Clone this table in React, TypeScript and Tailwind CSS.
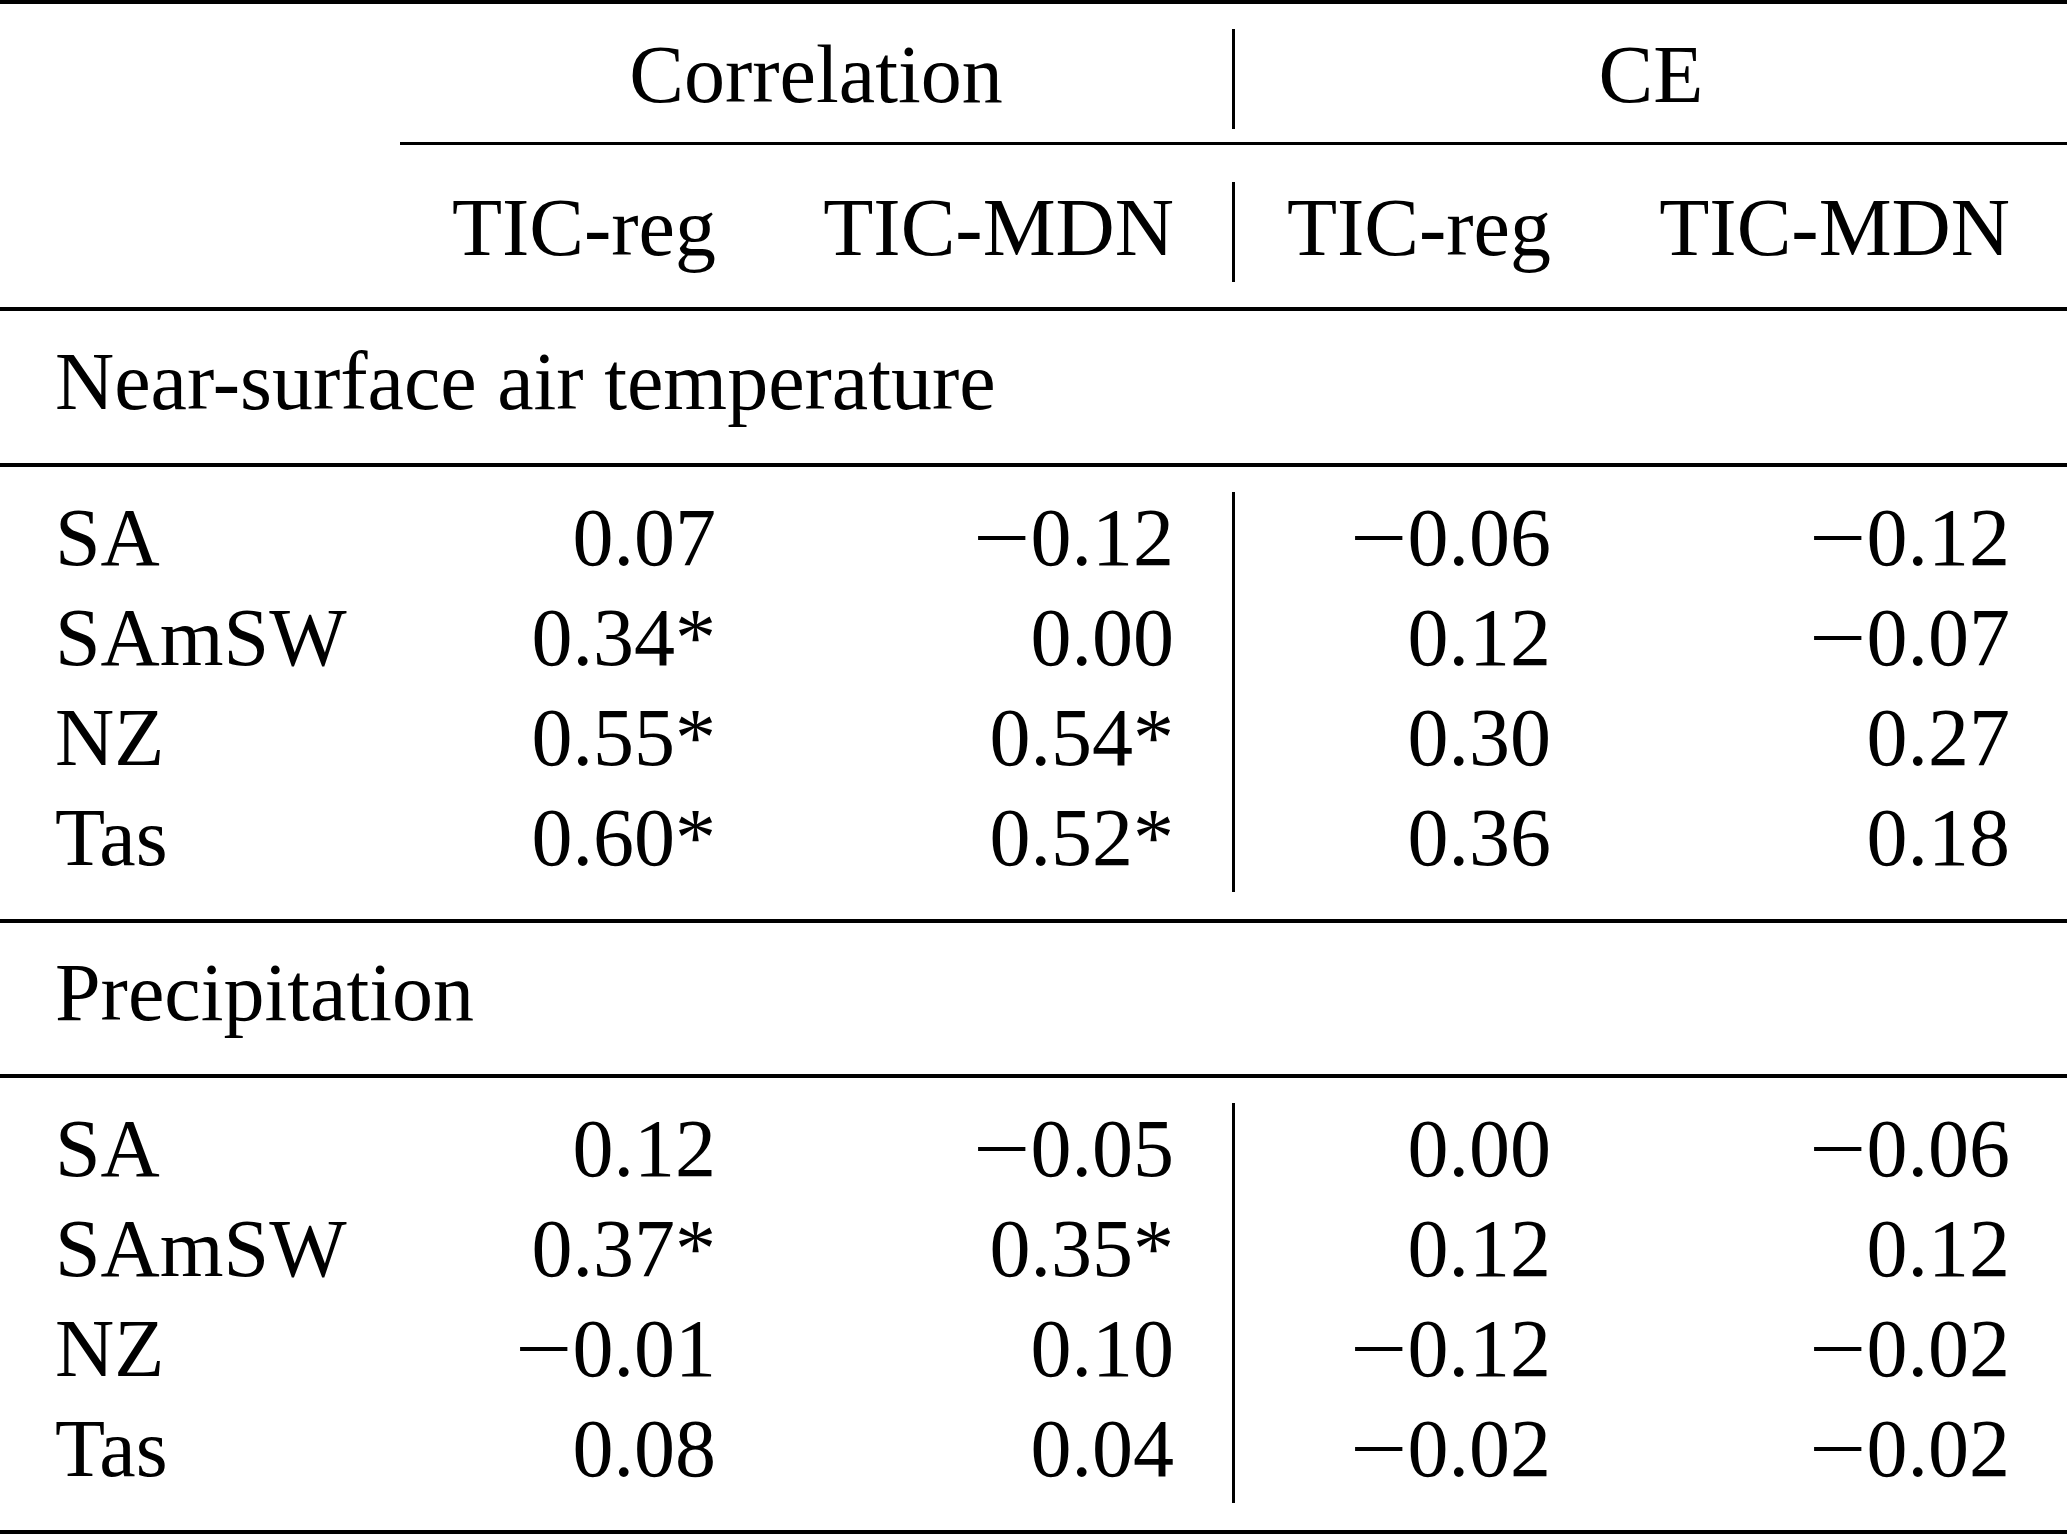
import React from "react";

type Row = [string, string, string, string, string];

const temperature: Row[] = [
  ["SA", "0.07", "-0.12", "-0.06", "-0.12"],
  ["SAmSW", "0.34*", "0.00", "0.12", "-0.07"],
  ["NZ", "0.55*", "0.54*", "0.30", "0.27"],
  ["Tas", "0.60*", "0.52*", "0.36", "0.18"],
];

const precipitation: Row[] = [
  ["SA", "0.12", "-0.05", "0.00", "-0.06"],
  ["SAmSW", "0.37*", "0.35*", "0.12", "0.12"],
  ["NZ", "-0.01", "0.10", "-0.12", "-0.02"],
  ["Tas", "0.08", "0.04", "-0.02", "-0.02"],
];

// column boxes: label 400 | corr-reg 373 | corr-mdn 462 (incl. 3px rule) | ce-reg 373 | ce-mdn 459
const grid = "grid grid-cols-[400px_373px_462px_373px_459px]";
const cell = "h-[100px] leading-[92px] whitespace-nowrap";

function Num({ v }: { v: string }) {
  if (!v.startsWith("-")) return <>{v}</>;
  // math minus is a touch longer than the text-font one
  return (
    <>
      <span className="inline-block origin-right scale-x-[1.24]">{"\u2212"}</span>
      {v.slice(1)}
    </>
  );
}

function Rule({ thin = false, inset = false }: { thin?: boolean; inset?: boolean }) {
  return <div className={`${thin ? "h-[3px]" : "h-[4px]"} bg-black ${inset ? "ml-[400px]" : ""}`} />;
}

function DataBlock({ rows }: { rows: Row[] }) {
  return (
    <div className={grid}>
      {rows.map((r) => (
        <React.Fragment key={r[0]}>
          <div className={`${cell} pl-[55px]`}>{r[0]}</div>
          <div className={`${cell} text-right pr-[57px]`}>
            <Num v={r[1]} />
          </div>
          <div className={`${cell} text-right pr-[58px] border-r-[3px] border-black`}>
            <Num v={r[2]} />
          </div>
          <div className={`${cell} text-right pr-[57px]`}>
            <Num v={r[3]} />
          </div>
          <div className={`${cell} text-right pr-[57px]`}>
            <Num v={r[4]} />
          </div>
        </React.Fragment>
      ))}
    </div>
  );
}

export default function App() {
  return (
    <div
      className="w-[2067px] h-[1534px] bg-white text-black text-[82px] overflow-hidden"
      style={{ fontFamily: '"Liberation Serif", "Times New Roman", serif' }}
    >
      <Rule />

      {/* spanning header */}
      <div className={`${grid} mt-[25px]`}>
        <div className={cell} />
        <div className={`${cell} col-span-2 text-center border-r-[3px] border-black`}>Correlation</div>
        <div className={`${cell} col-span-2 text-center`}>CE</div>
      </div>
      <div className="mt-[13px]">
        <Rule thin inset />
      </div>

      {/* method header */}
      <div className={`${grid} mt-[37px]`}>
        <div className={cell} />
        <div className={`${cell} text-right pr-[57px]`}>TIC-reg</div>
        <div className={`${cell} text-right pr-[58px] border-r-[3px] border-black`}>TIC-MDN</div>
        <div className={`${cell} text-right pr-[57px]`}>TIC-reg</div>
        <div className={`${cell} text-right pr-[57px]`}>TIC-MDN</div>
      </div>
      <div className="mt-[25px]">
        <Rule />
      </div>

      <div className={`${cell} mt-[25px] pl-[55px]`}>Near-surface air temperature</div>
      <div className="mt-[27px]">
        <Rule />
      </div>

      <div className="mt-[25px]">
        <DataBlock rows={temperature} />
      </div>
      <div className="mt-[27px]">
        <Rule />
      </div>

      <div className={`${cell} mt-[24px] pl-[55px]`}>Precipitation</div>
      <div className="mt-[27px]">
        <Rule />
      </div>

      <div className="mt-[25px]">
        <DataBlock rows={precipitation} />
      </div>
      <div className="mt-[27px]">
        <Rule />
      </div>
    </div>
  );
}
